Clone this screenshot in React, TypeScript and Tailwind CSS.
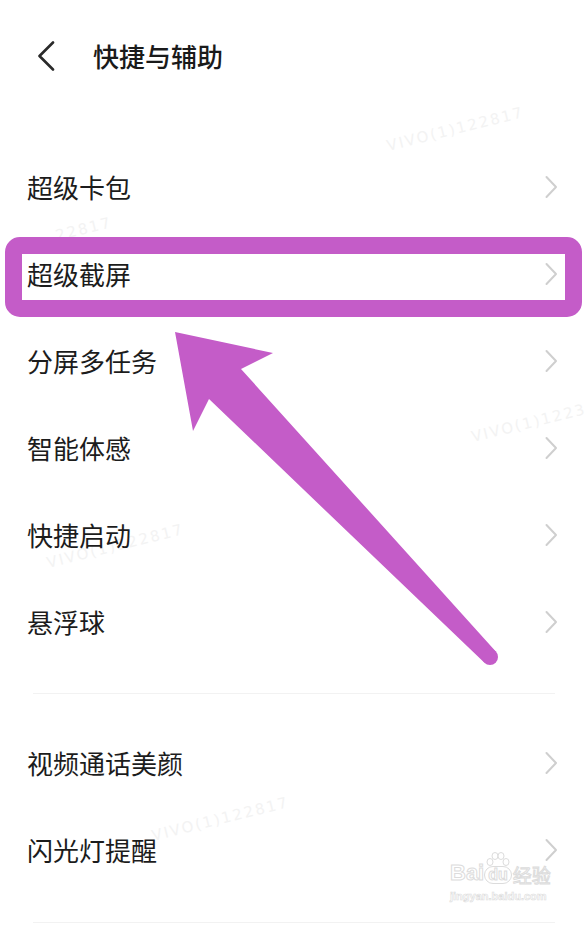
import React from "react";

const font = { fontFamily: '"Noto Sans CJK SC", "Noto Sans", sans-serif' };

function Chevron() {
  return (
    <svg width="14" height="24" viewBox="0 0 14 24" className="shrink-0">
      <path d="M2.5 2 L12 12 L2.5 22" fill="none" stroke="#cfcfcf" strokeWidth="2" strokeLinecap="round" strokeLinejoin="round" />
    </svg>
  );
}

function Row({ label }: { label: string }) {
  return (
    <div className="h-[87px] flex items-center justify-between pl-[27px] pr-[30px]">
      <span className="text-[26px] leading-none text-[#1c1c1c]">{label}</span>
      <Chevron />
    </div>
  );
}

function Watermark({ text, className }: { text: string; className: string }) {
  return (
    <div
      className={`absolute text-[15px] tracking-[2px] text-[#f3f3f3] -rotate-[14deg] select-none pointer-events-none ${className}`}
      style={{ fontFamily: '"DejaVu Sans", sans-serif' }}
    >
      {text}
    </div>
  );
}

export default function App() {
  return (
    <div className="relative w-[588px] h-[930px] bg-white overflow-hidden" style={font}>
      {/* watermarks */}
      <Watermark text="VIVO(1)122817" className="left-[385px] top-[118px]" />
      <Watermark text="22817" className="left-[55px] top-[218px]" />
      <Watermark text="VIVO(1)1223" className="left-[470px] top-[412px]" />
      <Watermark text="VIVO(1)122817" className="left-[45px] top-[535px]" />
      <Watermark text="VIVO(1)122817" className="left-[150px] top-[808px]" />

      {/* header */}
      <div className="h-[112px] flex items-center">
        <div className="w-[93px] flex items-center pl-[37px]">
          <svg width="18" height="30" viewBox="0 0 18 30">
            <path d="M16 1.5 L2.5 15 L16 28.5" fill="none" stroke="#2a2a2a" strokeWidth="2.6" strokeLinecap="round" strokeLinejoin="round" />
          </svg>
        </div>
        <span className="text-[26px] leading-none font-medium text-[#1a1a1a]">快捷与辅助</span>
      </div>

      <div className="h-[31px]" />

      <div className="relative">
        <Row label="超级卡包" />
        <Row label="超级截屏" />
        <Row label="分屏多任务" />
        <Row label="智能体感" />
        <Row label="快捷启动" />
        <Row label="悬浮球" />
        {/* highlight annotation */}
        <div className="absolute left-[5px] top-[94px] w-[577px] h-[80px] rounded-[15px] border-[17px] border-[#c45cc8]" />
      </div>

      <div className="mt-[28px] mx-[33px] h-px bg-[#f2f2f2]" />

      <div className="mt-[25px]">
        <Row label="视频通话美颜" />
        <Row label="闪光灯提醒" />
      </div>

      <div className="mt-[29px] mx-[33px] h-px bg-[#f2f2f2]" />

      {/* arrow annotation */}
      <svg className="absolute left-0 top-0 pointer-events-none" width="588" height="930" viewBox="0 0 588 930">
        <polygon
          points="175,332 273,353 241,369 495.8,651.4 484.2,662.6 209,399 193,431"
          fill="#c45cc8"
        />
        <circle cx="490" cy="657" r="8" fill="#c45cc8" />
      </svg>

      {/* baidu jingyan logo */}
      <div className="absolute left-[450px] top-[862px] flex flex-col items-start pointer-events-none">
        <div className="flex items-end leading-none">
          <span
            className="text-[22px] font-bold text-white [-webkit-text-stroke:1px_#dcdcdc]"
            style={{ fontFamily: '"Liberation Sans", sans-serif' }}
          >
            Bai
          </span>
          <span className="relative flex items-end">
            <svg width="28" height="22" viewBox="0 0 28 22" className="absolute -top-[16px] left-[0px]">
              <g fill="white" stroke="#dcdcdc" strokeWidth="1">
                <ellipse cx="6" cy="12" rx="3" ry="3.5" />
                <ellipse cx="11" cy="6" rx="3" ry="3.5" />
                <ellipse cx="17" cy="6" rx="3" ry="3.5" />
                <ellipse cx="22" cy="12" rx="3" ry="3.5" />
              </g>
            </svg>
            <span
              className="text-[16px] font-bold text-white [-webkit-text-stroke:1px_#dcdcdc] px-[3px] rounded-full border border-[#dcdcdc]"
              style={{ fontFamily: '"Liberation Sans", sans-serif' }}
            >
              du
            </span>
          </span>
          <span className="text-[19px] text-white [-webkit-text-stroke:1px_#dcdcdc] ml-[1px]">经验</span>
        </div>
        <span
          className="text-[11px] font-bold text-white [-webkit-text-stroke:0.6px_#dcdcdc] mt-[4px]"
          style={{ fontFamily: '"Liberation Sans", sans-serif' }}
        >
          jingyan.baidu.com
        </span>
      </div>
    </div>
  );
}
